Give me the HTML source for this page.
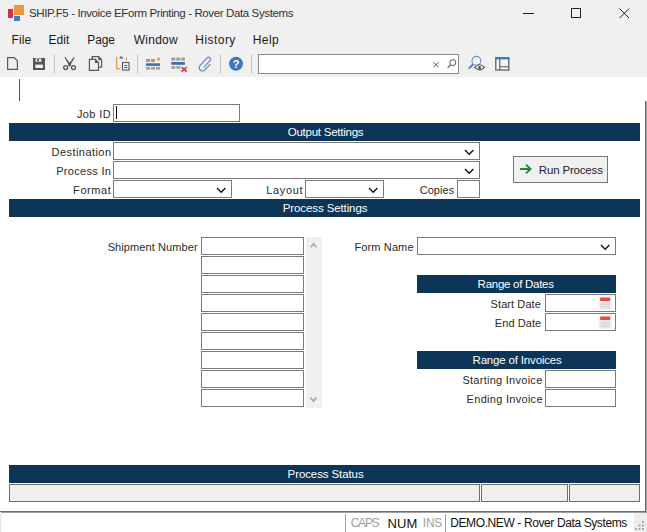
<!DOCTYPE html>
<html><head><meta charset="utf-8">
<style>
*{margin:0;padding:0;box-sizing:border-box}
html,body{width:647px;height:532px;overflow:hidden;background:#fff;font-family:"Liberation Sans",sans-serif}
.a{position:absolute}
.chrome{left:0;top:0;width:647px;height:77px;background:#f0f0f0}
.t{white-space:nowrap;line-height:1;color:#222}
.lbl{font-size:11px;color:#2b2b2b;text-align:right;white-space:nowrap;line-height:1}
.box{border:1px solid #7a7a7a;background:#fff}
.bar{background:#0c3557;color:#fff;font-size:12px;text-align:center;line-height:18px;white-space:nowrap}
.sep{width:1px;background:#c8c8c8}
.chev{width:8px;height:5px}
</style></head><body>
<div class="a chrome"></div>
<!-- logo -->
<div class="a" style="left:8px;top:9px;width:5px;height:9px;background:#d4324a"></div>
<div class="a" style="left:14px;top:5px;width:10px;height:10px;background:#f0963a"></div>
<div class="a" style="left:14px;top:16px;width:6px;height:5px;background:#3d7ec8"></div>
<div class="a t" style="left:29px;top:7.7px;font-size:11.5px;letter-spacing:-0.38px;color:#333">SHIP.F5 - Invoice EForm Printing - Rover Data Systems</div>
<!-- window buttons -->
<div class="a" style="left:523px;top:13px;width:11px;height:1px;background:#222"></div>
<div class="a" style="left:571px;top:8px;width:10px;height:10px;border:1px solid #222"></div>
<svg class="a" style="left:619px;top:8px" width="11" height="11" viewBox="0 0 11 11"><path d="M0.6 0.6L10 10M10 0.6L0.6 10" stroke="#222" stroke-width="1"/></svg>
<!-- menu -->
<div class="a t" style="left:11.6px;top:34.3px;font-size:12px;letter-spacing:0.1px;color:#1a1a1a">File</div>
<div class="a t" style="left:48.4px;top:34.3px;font-size:12px;letter-spacing:0.13px;color:#1a1a1a">Edit</div>
<div class="a t" style="left:87.3px;top:34.3px;font-size:12px;letter-spacing:-0.1px;color:#1a1a1a">Page</div>
<div class="a t" style="left:133.7px;top:34.3px;font-size:12px;letter-spacing:0.26px;color:#1a1a1a">Window</div>
<div class="a t" style="left:195.3px;top:34.3px;font-size:12px;letter-spacing:0.45px;color:#1a1a1a">History</div>
<div class="a t" style="left:252.8px;top:34.3px;font-size:12px;letter-spacing:0.4px;color:#1a1a1a">Help</div>
<!-- toolbar -->
<svg class="a" style="left:0;top:0" width="647" height="77" viewBox="0 0 647 77">
<g fill="none" stroke="#5a5a5a" stroke-width="1.2">
<path d="M7.6 57.6H14.2L17.4 60.8V69.4H7.6Z"/>

</g>
<path d="M33 58H45V70H33Z" fill="#555"/>
<path d="M35.5 58.6H41.3V61.8H35.5Z" fill="#f0f0f0"/>
<path d="M37 59.2H39V61.2H37Z" fill="#555"/>
<path d="M35.3 64.6H42.9V68H35.3Z" fill="#f0f0f0"/>
<rect x="54" y="54" width="1" height="20" fill="#c4c4c4"/>
<!-- scissors -->
<g fill="#555">
<path d="M64.4 57.2L65.6 57.2L71.4 65.2L69.6 66.6Z"/>
<path d="M74.8 57.2L73.6 57.2L67.8 65.2L69.6 66.6Z"/>
</g>
<g stroke="#555" fill="none">
<circle cx="65.7" cy="67.6" r="2" stroke-width="1.3"/>
<circle cx="73.5" cy="67.6" r="2" stroke-width="1.3"/>
</g>
<!-- copy -->
<g fill="#f0f0f0" stroke="#5a5a5a" stroke-width="1.2">
<path d="M92.2 56.6H98.6L101.6 59.6V67.2H92.2Z"/>
<path d="M89.4 59.4H95.4L98.5 62.5V70.4H89.4Z"/>
</g>
<path d="M98.2 56.2L102 60H98.2Z" fill="#5a5a5a"/>
<path d="M95 59L98.9 62.9H95Z" fill="#5a5a5a"/>
<!-- paste -->
<path d="M116.6 57V68.8H120.4" fill="none" stroke="#f0a050" stroke-width="1.4"/>
<path d="M119.4 58.4Q119.6 56.2 121.2 56.2Q122.8 56.2 123 58.4Z" fill="#666"/>
<path d="M126.4 57.4V60.6" stroke="#f0a050" stroke-width="1.2"/>
<rect x="122.5" y="62.5" width="6.5" height="7.6" fill="#f0f0f0" stroke="#5a5a5a" stroke-width="1.1"/>
<path d="M124.2 65.5H127.4M124.2 67.5H127.4" stroke="#5a5a5a" stroke-width="1"/>
<rect x="137" y="54" width="1" height="20" fill="#c4c4c4"/>
<!-- grid insert -->
<g fill="#a29d99">
<rect x="146" y="59" width="4" height="3"/><rect x="151" y="59" width="4" height="3"/>
<rect x="146" y="67" width="4" height="2.6"/><rect x="151" y="67" width="4" height="2.6"/><rect x="156" y="67" width="4" height="2.6"/>
</g>
<rect x="146" y="63.3" width="14" height="2.6" fill="#3b71b2"/>
<rect x="157" y="57.6" width="3" height="3" fill="#f0a050"/>
<!-- grid delete -->
<g fill="#a29d99">
<rect x="171.3" y="57.6" width="4" height="3"/><rect x="176.3" y="57.6" width="4" height="3"/><rect x="181.3" y="57.6" width="3.6" height="3"/>
<rect x="171.3" y="66.2" width="4" height="2.6"/><rect x="176.3" y="66.2" width="4" height="2.6"/>
</g>
<rect x="171.3" y="62" width="13.6" height="2.8" fill="#3b71b2"/>
<path d="M181.6 67L186.8 71.6M186.8 67L181.6 71.6" stroke="#cc3040" stroke-width="1.5"/>
<!-- paperclip -->
<path transform="translate(205.4 64.2) rotate(43)" d="M3.6 -3.4V4.4A3.3 3.3 0 0 1 -3 4.4V-5.8A2 2 0 0 1 1 -5.8V3.2" fill="none" stroke="#5f82b8" stroke-width="1.15"/>
<rect x="220" y="54" width="1" height="20" fill="#c4c4c4"/>
<!-- help -->
<circle cx="236" cy="63.7" r="7" fill="#3f78c0"/>
<text x="236" y="68" font-family="Liberation Sans" font-weight="bold" font-size="11" fill="#fff" text-anchor="middle">?</text>
<rect x="251" y="54" width="1" height="20" fill="#c4c4c4"/>
<!-- search box -->
<rect x="258.5" y="54.5" width="200" height="19" fill="#fff" stroke="#8a8a8a"/>
<path d="M433.6 62.2L438.6 67.2M438.6 62.2L433.6 67.2" stroke="#555" stroke-width="1"/>
<circle cx="452.8" cy="62.6" r="3" fill="none" stroke="#555" stroke-width="1"/>
<path d="M450.6 64.8L447.6 67.8" stroke="#555" stroke-width="1.2"/>
<!-- find eye -->
<circle cx="476.4" cy="60.8" r="4.4" fill="#eef2f8" stroke="#6f8fbf" stroke-width="1.1"/>
<path d="M473.2 64.2L468.8 68.6" stroke="#3f78c0" stroke-width="1.7"/>
<path d="M474.6 67.4Q479.6 62.2 484.4 67.4Q479.6 72.4 474.6 67.4Z" fill="#f0f0f0" stroke="#555" stroke-width="1.1"/>
<circle cx="479.5" cy="67.4" r="1.5" fill="#555"/>
<!-- layout icon -->
<rect x="495.8" y="57.8" width="13" height="12.2" fill="#f4f6fa" stroke="#555" stroke-width="1.2"/>
<rect x="495.2" y="57.2" width="14.2" height="2.2" fill="#3f78c0"/>
<path d="M499.8 59V70M499.8 66.8H508.6" stroke="#555" stroke-width="1.1"/>
</svg>
<!-- content -->
<div class="a" style="left:19px;top:79px;width:1px;height:22px;background:#555"></div>
<div class="a" style="left:645px;top:101px;width:1px;height:412px;background:#6a6a6a"></div><div class="a" style="left:646px;top:101px;width:1px;height:412px;background:#a0a0a0"></div>
<div class="a" style="left:0;top:511px;width:646px;height:1px;background:#6a6a6a"></div><div class="a" style="left:0;top:513px;width:1px;height:19px;background:#e6e6e6"></div><div class="a" style="left:1px;top:512px;width:646px;height:1px;background:#a0a0a0"></div>

<div class="a box" style="left:113px;top:104px;width:127px;height:18px"></div>
<div class="a" style="left:116px;top:106px;width:1px;height:13px;background:#000"></div>

<div class="a bar" style="left:9px;top:123px;width:631px;height:18px"></div>

<div class="a box" style="left:113px;top:142px;width:367px;height:18px"></div>
<div class="a box" style="left:113px;top:161px;width:367px;height:18px"></div>
<div class="a box" style="left:113px;top:180px;width:119px;height:18px"></div>
<div class="a box" style="left:305px;top:180px;width:79px;height:18px"></div>
<div class="a box" style="left:457px;top:180px;width:23px;height:18px"></div>

<div class="a" style="left:513px;top:156px;width:95px;height:27px;background:#f0f0f0;border:1px solid #777"></div>
<div class="a t" style="left:538.8px;top:164.6px;font-size:11.5px;letter-spacing:-0.17px;color:#222">Run Process</div>

<div class="a bar" style="left:9px;top:199px;width:631px;height:18px"></div>

<div class="a box" style="left:201px;top:237px;width:103px;height:18px"></div>
<div class="a box" style="left:201px;top:256px;width:103px;height:18px"></div>
<div class="a box" style="left:201px;top:275px;width:103px;height:18px"></div>
<div class="a box" style="left:201px;top:294px;width:103px;height:18px"></div>
<div class="a box" style="left:201px;top:313px;width:103px;height:18px"></div>
<div class="a box" style="left:201px;top:332px;width:103px;height:18px"></div>
<div class="a box" style="left:201px;top:351px;width:103px;height:18px"></div>
<div class="a box" style="left:201px;top:370px;width:103px;height:18px"></div>
<div class="a box" style="left:201px;top:389px;width:103px;height:18px"></div>
<div class="a" style="left:306px;top:237px;width:16px;height:171px;background:#f0f0f0"></div>

<div class="a box" style="left:417px;top:237px;width:199px;height:18px"></div>

<div class="a bar" style="left:417px;top:275px;width:199px;height:18px"></div>
<div class="a box" style="left:545px;top:294px;width:71px;height:18px"></div>
<div class="a box" style="left:545px;top:313px;width:71px;height:18px"></div>

<div class="a bar" style="left:417px;top:351px;width:199px;height:18px"></div>
<div class="a box" style="left:545px;top:370px;width:71px;height:18px"></div>
<div class="a box" style="left:545px;top:389px;width:71px;height:18px"></div>

<svg class="a" style="left:464px;top:149px" width="11" height="7" viewBox="0 0 11 7"><path d="M1 1L5.2 5.2L9.4 1" fill="none" stroke="#111" stroke-width="1.4"/></svg>
<svg class="a" style="left:464px;top:168px" width="11" height="7" viewBox="0 0 11 7"><path d="M1 1L5.2 5.2L9.4 1" fill="none" stroke="#111" stroke-width="1.4"/></svg>
<svg class="a" style="left:216px;top:187px" width="11" height="7" viewBox="0 0 11 7"><path d="M1 1L5.2 5.2L9.4 1" fill="none" stroke="#111" stroke-width="1.4"/></svg>
<svg class="a" style="left:368px;top:187px" width="11" height="7" viewBox="0 0 11 7"><path d="M1 1L5.2 5.2L9.4 1" fill="none" stroke="#111" stroke-width="1.4"/></svg>
<svg class="a" style="left:600px;top:244px" width="11" height="7" viewBox="0 0 11 7"><path d="M1 1L5.2 5.2L9.4 1" fill="none" stroke="#111" stroke-width="1.4"/></svg>
<svg class="a" style="left:598px;top:295px" width="14" height="15" viewBox="0 0 14 15"><rect x="0" y="0" width="14" height="15" fill="#f3f3f3"/><rect x="2" y="2.6" width="10.3" height="3.4" rx="1" fill="#e0503c"/><rect x="2.2" y="6" width="10" height="8" fill="#e6e6e6"/><path d="M2.5 9.2H12M2.5 11.7H12" stroke="#d0d0d0" stroke-width="0.8"/></svg>
<svg class="a" style="left:598px;top:314px" width="14" height="15" viewBox="0 0 14 15"><rect x="0" y="0" width="14" height="15" fill="#f3f3f3"/><rect x="2" y="2.6" width="10.3" height="3.4" rx="1" fill="#e0503c"/><rect x="2.2" y="6" width="10" height="8" fill="#e6e6e6"/><path d="M2.5 9.2H12M2.5 11.7H12" stroke="#d0d0d0" stroke-width="0.8"/></svg>
<div class="a bar" style="left:9px;top:465px;width:631px;height:18px"></div>
<div class="a" style="left:9px;top:484px;width:471px;height:18px;background:#efefef;border:1px solid #6e6e6e"></div>
<div class="a" style="left:481px;top:484px;width:87px;height:18px;background:#efefef;border:1px solid #6e6e6e"></div>
<div class="a" style="left:569px;top:484px;width:71px;height:18px;background:#efefef;border:1px solid #6e6e6e"></div>

<svg class="a" style="left:500px;top:150px" width="40" height="30" viewBox="500 150 40 30"><path d="M520 169H530.5M526 164.6L530.6 169L526 173.4" fill="none" stroke="#1f8b35" stroke-width="1.9"/></svg>
<svg class="a" style="left:306px;top:237px" width="16" height="171" viewBox="306 237 16 171"><path d="M310.8 247.2L313.6 243.8L316.4 247.2" fill="none" stroke="#a6a6a6" stroke-width="1.7"/><path d="M310.6 397.6L313.5 401.2L316.4 397.6" fill="none" stroke="#a6a6a6" stroke-width="1.7"/></svg>
<div class="a" style="left:634px;top:513px;width:13px;height:19px;background:#ededed"></div>
<svg class="a" style="left:630px;top:513px" width="17" height="19" viewBox="630 513 17 19"><g fill="#a8a8a8"><rect x="642" y="521" width="2" height="2"/><rect x="638.5" y="524.5" width="2" height="2"/><rect x="642" y="524.5" width="2" height="2"/><rect x="635" y="528" width="2" height="2"/><rect x="638.5" y="528" width="2" height="2"/><rect x="642" y="528" width="2" height="2"/></g></svg>
<!-- bar texts -->
<div class="a t" style="left:287.7px;top:127px;font-size:11.5px;letter-spacing:-0.24px;color:#fff">Output Settings</div>
<div class="a t" style="left:282.8px;top:203px;font-size:11.5px;letter-spacing:-0.11px;color:#fff">Process Settings</div>
<div class="a t" style="left:287.6px;top:469px;font-size:11.5px;letter-spacing:-0.1px;color:#fff">Process Status</div>
<div class="a t" style="left:477.6px;top:279px;font-size:11.5px;letter-spacing:-0.27px;color:#fff">Range of Dates</div>
<div class="a t" style="left:472.5px;top:355px;font-size:11.5px;letter-spacing:-0.17px;color:#fff">Range of Invoices</div>
<!-- labels -->
<div class="a lbl" style="left:77px;top:109px;letter-spacing:0.36px">Job ID</div>
<div class="a lbl" style="left:51.5px;top:147px;letter-spacing:0.45px">Destination</div>
<div class="a lbl" style="left:56.2px;top:166px;letter-spacing:0.31px">Process In</div>
<div class="a lbl" style="left:73.1px;top:185px;letter-spacing:0.58px">Format</div>
<div class="a lbl" style="left:266.3px;top:185px;letter-spacing:0.64px">Layout</div>
<div class="a lbl" style="left:419.7px;top:185px;letter-spacing:0.04px">Copies</div>
<div class="a lbl" style="left:107.7px;top:242px;letter-spacing:0.09px">Shipment Number</div>
<div class="a lbl" style="left:354.5px;top:242px;letter-spacing:0.12px">Form Name</div>
<div class="a lbl" style="left:490.6px;top:299px;letter-spacing:0.08px">Start Date</div>
<div class="a lbl" style="left:494.8px;top:318px;letter-spacing:0.07px">End Date</div>
<div class="a lbl" style="left:462.4px;top:375px;letter-spacing:0.27px">Starting Invoice</div>
<div class="a lbl" style="left:466.6px;top:394px;letter-spacing:0.29px">Ending Invoice</div>
<!-- status bar -->
<div class="a" style="left:345px;top:514px;width:1px;height:18px;background:#a0a0a0"></div>
<div class="a" style="left:445px;top:514px;width:1px;height:18px;background:#a0a0a0"></div>
<div class="a t" style="left:350.7px;top:517.3px;font-size:12px;letter-spacing:-1.23px;color:#a0a0a0">CAPS</div>
<div class="a t" style="left:387.6px;top:516.6px;font-size:13px;letter-spacing:0.1px;color:#111">NUM</div>
<div class="a t" style="left:422.8px;top:517.3px;font-size:12px;letter-spacing:-0.25px;color:#a0a0a0">INS</div>
<div class="a t" style="left:450.2px;top:517.3px;font-size:12px;letter-spacing:-0.39px;color:#111">DEMO.NEW - Rover Data Systems</div>
</body></html>
